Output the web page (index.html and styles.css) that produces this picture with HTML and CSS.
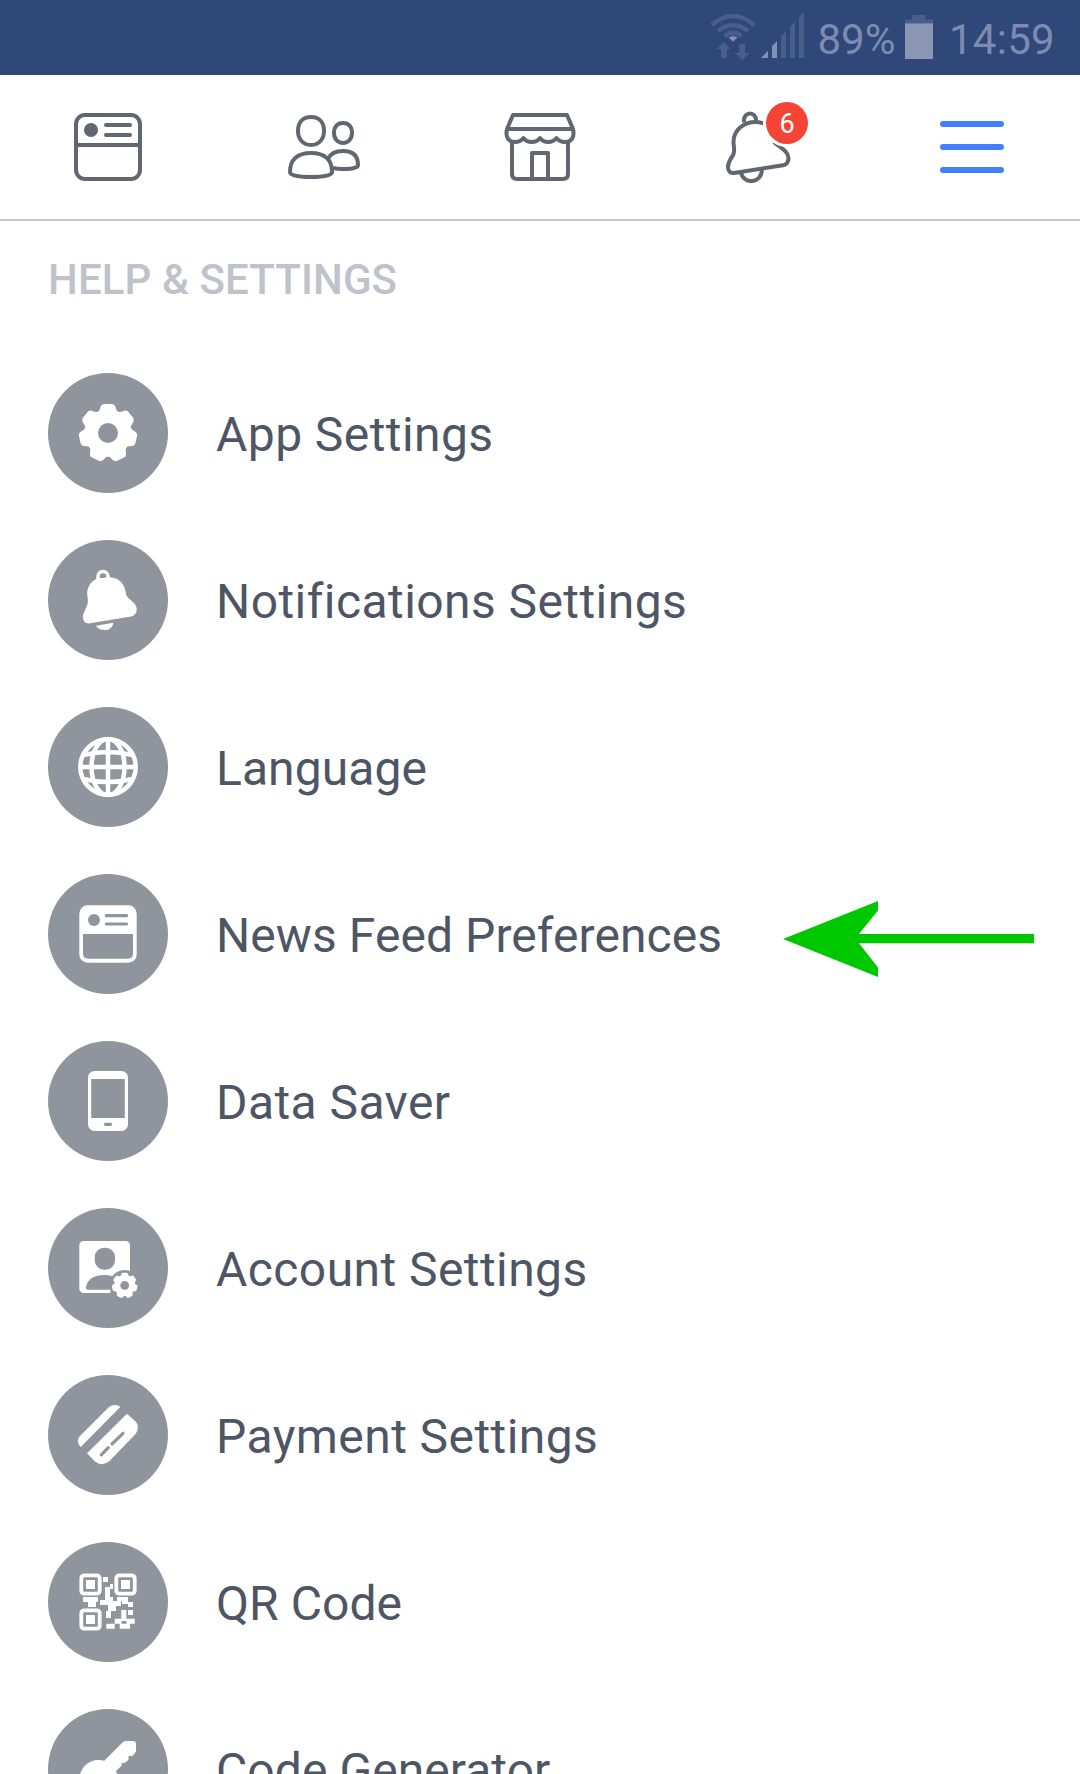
FILE: index.html
```
<!DOCTYPE html>
<html lang="en">
<head>
    <meta charset="UTF-8">
    <meta name="viewport" content="width=device-width, initial-scale=1.0">
    <title>Help &amp; Settings</title>
    <link rel="stylesheet" href="styles.css">
</head>
<body>
    <div class="status-bar">
        <svg class="wifi" width="46" height="49" viewBox="0 0 46 49">
            <g class="dim-line">
                <path d="M1.800 13Q23-5 44.200 13"/>
                <path d="M8 18.800Q23 7.500 38 18.800"/>
                <path d="M14.500 24.300Q23 17 31.500 24.300"/>
            </g>
            <path class="lit" d="M18.500 25.500Q23 22.500 27.500 25.500L23 29.500Z"/>
            <path class="dim" d="M13.700 30L20.500 37H17V46H11V37H7ZM32.300 48.300L39.500 41H35V32H29.300V41H25.300Z"/>
        </svg>
        <svg class="signal" width="43" height="46" viewBox="0 0 43 46">
            <path class="lit" d="M0 46L7 38.700V46ZM11 34L16 29V46H11Z"/>
            <path class="dim" d="M20 24.500L25 19.300V46H20ZM29 15L34 9.700V46H29ZM38 5L43 0V46H38Z"/>
        </svg>
        <span class="percent">89%</span>
        <svg class="battery" width="28" height="44" viewBox="0 0 28 44">
            <path class="dim" d="M7.300 0H20.300V4.500H28V9H0V4.500H7.300Z"/>
            <path class="full" d="M0 8.500H28V44H0Z"/>
        </svg>
        <span class="clock">14:59</span>
    </div>

    <div class="tabs">
        <div class="tab">
            <svg width="72" height="72" viewBox="0 0 72 72">
                <rect x="4" y="4" width="64" height="64" rx="9"/>
                <path d="M4 34H68"/>
                <path class="round" d="M34 14H58M34 24H58"/>
                <circle class="solid" cx="19" cy="19" r="7"/>
            </svg>
        </div>
        <div class="tab">
            <svg width="72" height="72" viewBox="0 0 72 72">
                <path d="M23 6C32 6 36 12 36 20S31 34 23 34S10 28 10 20S14 6 23 6Z"/>
                <path d="M55 12C61 12 64 16 64 22S60 32 55 32S46 28 46 22S49 12 55 12Z"/>
                <path d="M2 61C2 49 9 42 23 42S44 49 44 61Q44 66 23 66Q2 66 2 61Z"/>
                <path d="M40 48C43 41 49 40 55 40C66 40 70 46 70 54Q70 58 55 58Q49 58 45 57"/>
            </svg>
        </div>
        <div class="tab">
            <svg width="72" height="72" viewBox="0 0 72 72">
                <path d="M3 18L9 4H63L69 18Z"/>
                <path d="M3 18C1 27 5 31 11 31Q16.500 31 19.500 27Q22 31 28 31Q33 31 36 27Q39 31 44 31Q49.500 31 52.500 27Q55.500 31 61 31C67 31 71 27 69 18"/>
                <path d="M8 30V63Q8 68 13 68H59Q64 68 64 63V30M28 68V42H44V68"/>
            </svg>
        </div>
        <div class="tab">
            <div class="bell">
                <svg width="72" height="72" viewBox="0 0 72 72">
                    <path d="M24 11.500V9A6 6.500 0 0 1 36 9V10.500"/>
                    <path d="M44 12.500C27 7 13 18 13.500 32C13.700 36 15 39 13.500 43C12 47 8 50 8 56C8 60 10 62.500 14 62L63 54.300C69 53.300 70 46 66 41C62 36 58 35 54 31"/>
                    <path d="M21 61.500C23 73.500 42 73.500 42 58"/>
                </svg>
                <span class="badge">6</span>
            </div>
        </div>
        <div class="tab active">
            <div class="bar"></div>
            <div class="bar"></div>
            <div class="bar"></div>
        </div>
    </div>

    <div class="menu">
        <h2>HELP &amp; SETTINGS</h2>
        <div class="item wide">
            <svg class="icon" viewBox="0 0 120 120">
                <defs>
                    <path id="tooth" d="M48.500 40L51 38.500L52.500 34Q53.300 31.200 56 31H64Q66.700 31.200 67.500 34L69 38.500L71.500 40Z"/>
                    <g id="gear">
                        <circle cx="60" cy="60" r="23.800"/>
                        <use href="#tooth"/>
                        <use href="#tooth" transform="rotate(51.430 60 60)"/>
                        <use href="#tooth" transform="rotate(102.860 60 60)"/>
                        <use href="#tooth" transform="rotate(154.290 60 60)"/>
                        <use href="#tooth" transform="rotate(205.710 60 60)"/>
                        <use href="#tooth" transform="rotate(257.140 60 60)"/>
                        <use href="#tooth" transform="rotate(308.570 60 60)"/>
                        <circle class="cut" cx="60" cy="60" r="10"/>
                    </g>
                </defs>
                <use href="#gear"/>
            </svg>
            <span>App Settings</span>
        </div>
        <div class="item wide">
            <svg class="icon" viewBox="0 0 120 120">
                <path class="line" d="M50 39V36.500A5 5 0 0 1 60 36.500V39" stroke-width="3.500"/>
                <path d="M49 38.500C42 42 39 48 39.200 54C39.300 58 40.500 60 39.500 64C38 69 35 73 35 77C35 81.500 38 84 42 83.300L83 76.500C88.500 75.500 90 69 87.500 65C84 59.500 79 59 78 54C77 45 72 37.500 61.300 37.300Z"/>
                <path d="M48 85.700L65.300 82.700C64.500 92 51.500 92 48 85.700Z"/>
            </svg>
            <span>Notifications Settings</span>
        </div>
        <div class="item">
            <svg class="icon" viewBox="0 0 120 120">
                <g class="line" stroke-width="4.500">
                    <circle cx="60" cy="60" r="27.700"/>
                    <ellipse cx="60" cy="60" rx="16.500" ry="28"/>
                    <path d="M60 31V89M32 60H88M35.500 48Q60 42 84.500 48M35.500 72Q60 78 84.500 72"/>
                </g>
            </svg>
            <span>Language</span>
        </div>
        <div class="item">
            <svg class="icon" viewBox="0 0 120 120">
                <rect x="31.300" y="31.300" width="57.400" height="57.400" rx="8.500"/>
                <path class="cut" d="M35 60H85V79.500Q85 84.700 79.500 84.700H40.500Q35 84.700 35 79.500Z"/>
                <circle class="cut" cx="46" cy="46" r="6"/>
                <path class="groove" d="M58.300 41.700H78.500M58.300 50H78.500"/>
            </svg>
            <span>News Feed Preferences</span>
            <svg class="arrow" width="252" height="76" viewBox="0 0 252 76">
                <path d="M0 38L95 0V9.500L76 33H251V42.300H76L95 66.500V76Z"/>
            </svg>
        </div>
        <div class="item wide">
            <svg class="icon" viewBox="0 0 120 120">
                <rect x="40" y="30" width="40" height="60" rx="6.500"/>
                <rect class="cut" x="43.200" y="38" width="33.600" height="39"/>
                <path class="groove" d="M57.500 83.300H62.500"/>
            </svg>
            <span>Data Saver</span>
        </div>
        <div class="item wide">
            <svg class="icon" viewBox="0 0 120 120">
                <rect x="31.300" y="33" width="50.700" height="52" rx="4.500"/>
                <rect class="cut" x="46.700" y="39.700" width="20.300" height="22" rx="9.500"/>
                <path class="cut" d="M40 81.700Q37.500 81.700 38 79C39.500 71 46 67 56.500 67C60 67 63 67.500 66 69L90 62V92H62V81.700Z"/>
                <circle class="cut" cx="76.700" cy="77.500" r="15.500"/>
                <circle cx="61" cy="83.350" r="1.650"/>
                <use href="#gear" transform="translate(76.700 77.500) scale(.44) translate(-60 -60)"/>
            </svg>
            <span>Account Settings</span>
        </div>
        <div class="item wide">
            <svg class="icon" viewBox="0 0 120 120">
                <path d="M32.700 72C29 68 29 64 32 61L60.500 32.500C63.500 29.500 69 29 72.300 32Z"/>
                <path d="M39 78.300L79 38.700L87.500 46.500Q92 51 88 58.500L61.500 86Q54 92 47 86.500Z"/>
                <path class="groove" d="M75 58.300L64 69M60.300 72.700L53.300 79.800"/>
            </svg>
            <span>Payment Settings</span>
        </div>
        <div class="item">
            <svg class="icon" viewBox="0 0 120 120">
                <g class="line" stroke-width="3.800">
                    <rect x="33.300" y="33.300" width="18.400" height="18.400" rx="3"/>
                    <rect x="68.300" y="33.300" width="18.400" height="18.400" rx="3"/>
                    <rect x="33.300" y="68.300" width="18.400" height="18.400" rx="3"/>
                </g>
                <path d="M38 38h9v9h-9ZM73 38h9v9h-9ZM38 73h9v9h-9Z"/>
                <path d="M55 35h5v5h-5ZM62 42h3v5h-3v8h3v4h8v5h-5v5h-5v7h-5V69h2v-6h-8v-5h5V45h5ZM35 55h15v5h-2v5h-8v-5h-5ZM69 55h11v5h5v5h-5v-3h-6v-3h-5ZM80 68h5v5h-5ZM73.300 68h5v8.700h8.400v5h-4.700v5h-10.300v-5h-5v-5h6.600ZM58.300 81.700h8.400v5h-8.400Z"/>
                <path class="cut" d="M73.500 79h5v2.700h-5Z"/>
            </svg>
            <span>QR Code</span>
        </div>
        <div class="item">
            <svg class="icon" viewBox="0 0 120 120">
                <path d="M56 52L74 34Q76 32 78 32H85Q88 32 88 35V42.500L84.500 47H80.500V51L76.500 54H73.700V56.500L68 62L70 70L56 72Z"/>
                <circle cx="50.500" cy="70" r="19"/>
            </svg>
            <span>Code Generator</span>
        </div>
    </div>
</body>
</html>
```
FILE: styles.css
```
body {
    margin: 0;
    height: 1774px;
    overflow: hidden;
    background-color: #fff;
    font-family: Roboto, sans-serif;
}
svg {
    display: block;
    flex-shrink: 0;
}

/* status bar */
.status-bar {
    display: flex;
    justify-content: flex-end;
    align-items: flex-start;
    box-sizing: border-box;
    height: 75px;
    padding: 12px 25px 0 0;
    background-color: #30477a;
    color: #7c8bae;
    font-size: 42px;
    line-height: 56px;
}
.dim {
    fill: #4a5e8d;
}
.dim-line {
    fill: none;
    stroke: #4a5e8d;
    stroke-width: 4.4;
}
.lit {
    fill: #8392b4;
}
.full {
    fill: #8a96b4;
}
.signal {
    margin-left: 5px;
}
.percent {
    margin-left: 13px;
}
.battery {
    margin: 3px 15.5px 0 10px;
}
.clock {
    letter-spacing: 0.3px;
}

/* top tabs */
.tabs {
    display: flex;
    height: 144px;
    border-bottom: 2px solid #c5c6cd;
}
.tab {
    flex: 1;
    display: flex;
    flex-direction: column;
    justify-content: center;
    align-items: center;
}
.tab svg {
    fill: none;
    stroke: #606770;
    stroke-width: 4;
    stroke-linejoin: round;
}
.tab .round {
    stroke-linecap: round;
}
.tab .solid {
    fill: #606770;
    stroke: none;
}
.bell {
    position: relative;
}
.badge {
    position: absolute;
    left: 46px;
    top: -9px;
    width: 42px;
    height: 42px;
    border-radius: 50%;
    box-shadow: 0 0 0 3px #fff;
    background-color: #f54336;
    color: #fff;
    font-size: 27px;
    line-height: 44px;
    text-align: center;
}
.active {
    gap: 17px;
}
.bar {
    width: 64px;
    height: 6px;
    border-radius: 3px;
    background-color: #4080ff;
}

/* menu list */
.menu {
    display: flex;
    flex-direction: column;
    gap: 47px;
    padding: 34px 45px 0 48px;
}
h2 {
    margin: 0 0 21px;
    color: #bec2cb;
    font-size: 42px;
    font-weight: 500;
    line-height: 50px;
    letter-spacing: 0.1px;
}
.item {
    display: flex;
    align-items: center;
    height: 120px;
    color: #4e5665;
    font-size: 48px;
    letter-spacing: 0.07px;
}
.wide {
    letter-spacing: 0.43px;
}
.item span {
    margin-left: 48px;
    padding-top: 3px;
    white-space: nowrap;
}
.icon {
    width: 120px;
    height: 120px;
    border-radius: 50%;
    background-color: #90949c;
    fill: #fff;
}
.line {
    fill: none;
    stroke: #fff;
}
.cut {
    fill: #90949c;
}
.groove {
    fill: none;
    stroke: #90949c;
    stroke-width: 3.2;
    stroke-linecap: round;
}
.arrow {
    margin: 9px 0 0 auto;
    fill: #00c800;
}
```
